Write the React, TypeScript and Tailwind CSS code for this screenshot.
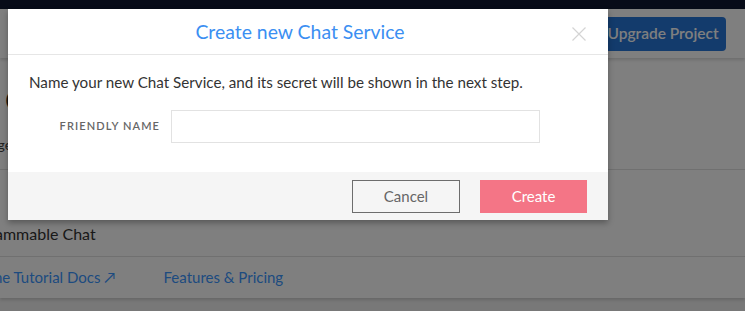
import React from "react";

const font = { fontFamily: "Lato, 'Open Sans', sans-serif" };

const App = () => {
  return (
    <div
      className="relative w-[745px] h-[311px] overflow-hidden bg-[#f0f0f0]"
      style={font}
    >
      {/* page behind the dialog */}
      <div className="h-[9px] bg-[#0e1730]" />
      <div className="h-[49px] bg-white flex items-center justify-end pr-[19px] shadow-[0_2px_3px_rgba(0,0,0,0.15)] relative z-[1]">
        <button className="h-[34px] w-[126px] rounded-[4px] bg-[#2676d8] text-white text-[15.5px] font-semibold">
          Upgrade Project
        </button>
      </div>
      <div className="bg-white shadow-[0_2px_3px_rgba(0,0,0,0.15)]">
        <div className="h-[112px] flex flex-col pl-[5px] pt-[24px] border-b border-[#e0e0e0]">
          <h1 className="text-[28px] leading-[36px] text-[#222]">Chat Services</h1>
          <p className="text-[14px] mt-[16px] -ml-[42px] text-[#444]">Manage your Chat Services</p>
        </div>
        <div className="h-[87px] pt-[52px] border-b border-[#e0e0e0]">
          <p className="text-[16px] -ml-[43px] text-[#333]">Programmable Chat</p>
        </div>
        <div className="h-[41px] flex items-center gap-[48px]">
          <a className="text-[15px] -ml-[48px] text-[#3b96ff]">Read the Tutorial Docs ↗</a>
          <a className="text-[15px] text-[#3b96ff]">Features &amp; Pricing</a>
        </div>
      </div>

      {/* overlay */}
      <div className="absolute inset-0 z-10 bg-black/50" />

      {/* dialog */}
      <div className="absolute z-20 left-[8px] top-[9px] w-[600px] bg-white shadow-[0_3px_6px_rgba(0,0,0,0.3)]">
        <div className="relative h-[46px] flex items-center justify-center border-b border-[#e6e6e6]">
          <h2 className="text-[19.4px] text-[#3b8ff2] pr-[16px]">Create new Chat Service</h2>
          <button className="absolute right-[22px] top-[18px] w-[14px] h-[14px]">
            <svg width="14" height="14" viewBox="0 0 14 14">
              <path d="M0.5 0.5 L13.5 13.5 M13.5 0.5 L0.5 13.5" stroke="#d4d4d4" strokeWidth="1.2" />
            </svg>
          </button>
        </div>
        <div className="px-[21px] pt-[17px] pb-[29px]">
          <p className="text-[15.2px] text-[#333] leading-[20px]">
            Name your new Chat Service, and its secret will be shown in the next step.
          </p>
          <div className="flex items-center mt-[18px]">
            <label className="w-[142px] pr-[11px] text-right text-[11px] font-semibold tracking-[0.1em] text-[#666] uppercase">
              Friendly Name
            </label>
            <input className="w-[369px] h-[33px] border border-[#e2e2e2] outline-none px-2 text-[14px]" />
          </div>
        </div>
        <div className="h-[48px] bg-[#f5f5f5] flex items-center justify-end gap-[20px] pr-[21px]">
          <button className="w-[108px] h-[33px] border border-[#6d6d6d] text-[15px] text-[#666]">
            Cancel
          </button>
          <button className="w-[107px] h-[33px] bg-[#f47586] text-[15px] text-white">
            Create
          </button>
        </div>
      </div>
    </div>
  );
};

export default App;
